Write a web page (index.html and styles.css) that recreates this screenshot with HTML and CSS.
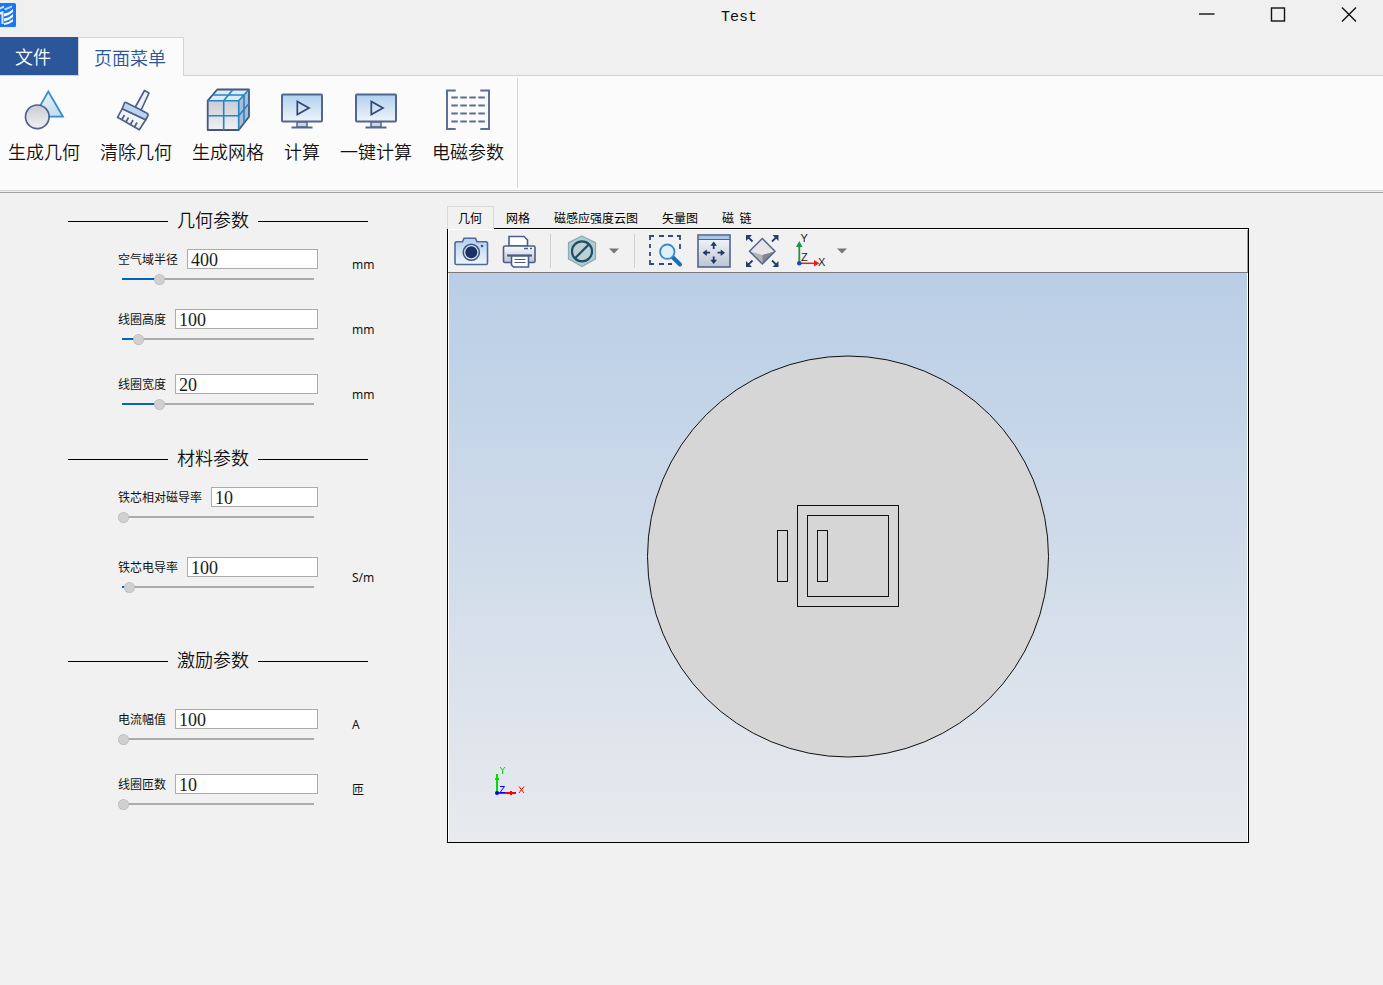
FILE: index.html
```html
<!DOCTYPE html>
<html lang="zh-CN">
<head>
<meta charset="utf-8">
<title>Test</title>
<link rel="stylesheet" href="styles.css">
</head>
<body>
<svg class="defs" width="0" height="0" aria-hidden="true">
  <defs>
    <linearGradient id="gray" x1="0" y1="0" x2="0" y2="1"><stop offset="0" stop-color="#c9ccd6"/><stop offset="1" stop-color="#f1f1f3"/></linearGradient>
    <linearGradient id="blue" x1="0" y1="0" x2="0" y2="1"><stop offset="0" stop-color="#b0d0ee"/><stop offset="1" stop-color="#f0f4f9"/></linearGradient>
    <linearGradient id="tri" x1="0" y1="0" x2="1" y2="1"><stop offset="0" stop-color="#f4f8fc"/><stop offset="1" stop-color="#b9d6f0"/></linearGradient>
    <linearGradient id="steel" x1="0" y1="0" x2="0" y2="1"><stop offset="0" stop-color="#fafafc"/><stop offset="1" stop-color="#bcc3d3"/></linearGradient>
    <symbol id="monitor" viewBox="0 0 48 48">
      <rect x="4" y="8.5" width="40" height="27" rx="1" fill="url(#blue)" stroke="#52668f" stroke-width="2"/>
      <path d="M19.300 15.500V28.500L31 22Z" fill="none" stroke="#33487a" stroke-width="1.700"/>
      <rect x="19" y="36" width="10" height="5" fill="#cfd3dc" stroke="#52668f" stroke-width="1.500"/>
      <path d="M13.500 41.500H34.500" stroke="#52668f" stroke-width="2"/>
    </symbol>
  </defs>
</svg>

<header class="titlebar">
  <svg class="logo" viewBox="0 0 16 24" width="16" height="24" aria-hidden="true">
    <path d="M0 0H14.500Q16 0 16 1.500V22.500Q16 24 14.500 24H0Z" fill="#1877f2"/>
    <path d="M0 4.500 4 2.500V4.500L0 6.500ZM0 9 3.500 8V21H1.500V11.500H0Z" fill="#dcebff"/>
    <path d="M4 5.500 12 2.500V4.500L5 7.500Z" fill="#b9d6ff"/>
    <path d="M4 10.500Q9 10 13 6V9Q9 12.500 4 13.500ZM4 15.500Q9 15 13 11V14Q9 17.500 4 18.500ZM4 20Q9 19.500 13 16V18.500Q9 21.500 4 22Z" fill="#fff"/>
  </svg>
  <h1 class="title">Test</h1>
  <div class="window-controls">
    <button type="button" aria-label="最小化"><svg viewBox="0 0 16 16" width="16" height="16"><path d="M0 7H15.500" stroke="#111" stroke-width="1.400"/></svg></button>
    <button type="button" aria-label="最大化"><svg viewBox="0 0 16 16" width="16" height="16"><rect x="1.500" y="1" width="13" height="13" fill="none" stroke="#111" stroke-width="1.400"/></svg></button>
    <button type="button" aria-label="关闭"><svg viewBox="0 0 16 16" width="16" height="16"><path d="M1 .5 15 14.500M15 .5 1 14.500" stroke="#111" stroke-width="1.400"/></svg></button>
  </div>
</header>

<nav class="menu-tabs">
  <button type="button" class="menu-tab file">文件</button>
  <button type="button" class="menu-tab active">页面菜单</button>
</nav>

<div class="ribbon">
  <div class="ribbon-group">
    <button type="button" class="ribbon-item">
      <svg viewBox="0 0 48 48" width="48" height="48"><path d="M28.300 5.500 43 30.700H14Z" fill="url(#tri)" stroke="#2e8fcb" stroke-width="1.700"/><circle cx="17.300" cy="30.800" r="11.800" fill="url(#gray)" stroke="#51618a" stroke-width="1.700"/></svg>
      <span>生成几何</span>
    </button>
    <button type="button" class="ribbon-item">
      <svg viewBox="0 0 48 48" width="48" height="48" stroke="#4f608a" stroke-width="1.700" stroke-linejoin="round"><path d="M32.500 4.500 37 7 28.500 25.500 22.500 22.500Z" fill="#eef1f6"/><path d="M10.300 22.700 5.500 31.300 27.300 43.800 33.700 33.800Z" fill="#f3f4f7"/><path d="M14 16.500Q12.500 16 12 18L10.300 22.700 33.700 33.800 36 29.500Q36.500 28 35 27.300L28 23.500 22 20.500Z" fill="#b8d6f2"/><path d="M10 33.500 12.500 29M14 36 16.500 31.500M18.500 38.500 21 34M22.500 41 25 36.500" fill="none"/></svg>
      <span>清除几何</span>
    </button>
    <button type="button" class="ribbon-item">
      <svg viewBox="0 0 48 48" width="48" height="48" stroke-linejoin="round"><path d="M3.700 14.700 13.300 3.500H45L34.700 14.700Z" fill="#dcebf7"/><path d="M34.700 14.700 45 3.500V30.700L34.700 44Z" fill="#a9bdd6"/><path d="M3.700 14.700H34.700V44H3.700Z" fill="url(#gray)"/><path d="M3.700 14.700 13.300 3.500H45V30.700L34.700 44H3.700Z" fill="none" stroke="#45577f" stroke-width="1.800"/><path d="M3.700 14.700H34.700V44M34.700 14.700 45 3.500M19.700 44V14.700L29 3.500M3.700 29.700H34.700L45 17.500M8.500 9H40V37" fill="none" stroke="#2485c4" stroke-width="1.600"/></svg>
      <span>生成网格</span>
    </button>
    <button type="button" class="ribbon-item narrow">
      <svg width="48" height="48"><use href="#monitor"/></svg>
      <span>计算</span>
    </button>
    <button type="button" class="ribbon-item">
      <svg width="48" height="48"><use href="#monitor"/></svg>
      <span>一键计算</span>
    </button>
    <button type="button" class="ribbon-item">
      <svg viewBox="0 0 48 48" width="48" height="48" fill="none" stroke="#5d6f94" stroke-width="2"><path d="M11.700 4.500H3V43H11.700M36.300 4.500H45V43H36.300"/><path d="M7.300 11.500H41M7.300 19.500H41M7.300 27.500H41M7.300 35.500H41" stroke-dasharray="6.500 2.500"/></svg>
      <span>电磁参数</span>
    </button>
  </div>
</div>

<main class="workspace">
  <form class="params">
    <fieldset class="section geometry">
      <legend class="section-title"><span>几何参数</span></legend>
      <div class="field">
        <div class="entry"><label for="radius">空气域半径</label><input class="text" id="radius" type="text" value="400"></div>
        <input class="slider" type="range" aria-label="空气域半径" value="19" style="--value:19">
        <span class="unit high">mm</span>
      </div>
      <div class="field">
        <div class="entry"><label for="coil-height">线圈高度</label><input class="text" id="coil-height" type="text" value="100"></div>
        <input class="slider" type="range" aria-label="线圈高度" value="8" style="--value:8">
        <span class="unit">mm</span>
      </div>
      <div class="field">
        <div class="entry"><label for="coil-width">线圈宽度</label><input class="text" id="coil-width" type="text" value="20"></div>
        <input class="slider" type="range" aria-label="线圈宽度" value="19" style="--value:19">
        <span class="unit">mm</span>
      </div>
    </fieldset>

    <fieldset class="section material">
      <legend class="section-title"><span>材料参数</span></legend>
      <div class="field">
        <div class="entry"><label for="permeability">铁芯相对磁导率</label><input class="text" id="permeability" type="text" value="10"></div>
        <input class="slider" type="range" aria-label="铁芯相对磁导率" value="0" style="--value:0">
      </div>
      <div class="field">
        <div class="entry"><label for="conductivity">铁芯电导率</label><input class="text" id="conductivity" type="text" value="100"></div>
        <input class="slider" type="range" aria-label="铁芯电导率" value="3" style="--value:3">
        <span class="unit">S/m</span>
      </div>
    </fieldset>

    <fieldset class="section excitation">
      <legend class="section-title"><span>激励参数</span></legend>
      <div class="field">
        <div class="entry"><label for="current">电流幅值</label><input class="text" id="current" type="text" value="100"></div>
        <input class="slider" type="range" aria-label="电流幅值" value="0" style="--value:0">
        <span class="unit high">A</span>
      </div>
      <div class="field">
        <div class="entry"><label for="turns">线圈匝数</label><input class="text" id="turns" type="text" value="10"></div>
        <input class="slider" type="range" aria-label="线圈匝数" value="0" style="--value:0">
        <span class="unit high">匝</span>
      </div>
    </fieldset>
  </form>

  <section class="viewer">
    <div class="view-tabs" role="tablist">
      <button type="button" role="tab" aria-selected="true" class="view-tab active">几何</button>
      <button type="button" role="tab" class="view-tab">网格</button>
      <button type="button" role="tab" class="view-tab">磁感应强度云图</button>
      <button type="button" role="tab" class="view-tab">矢量图</button>
      <button type="button" role="tab" class="view-tab">磁&nbsp; 链</button>
    </div>
    <div class="view-frame">
      <div class="toolbar">
        <button type="button" class="tool" aria-label="截图">
          <svg viewBox="0 0 36 36" width="36" height="36"><path d="M3.500 8.700H9.500L11 5.300H22.500L24 8.700H33Q34.500 8.700 34.500 10.500V30Q34.500 31.500 33 31.500H3.500Q2 31.500 2 30V10.500Q2 8.700 3.500 8.700Z" fill="url(#blue)" stroke="#51689a" stroke-width="1.600"/><circle cx="18.300" cy="19.300" r="8" fill="#d5e4f4" stroke="#3d5482" stroke-width="1.500"/><circle cx="18.300" cy="19.300" r="6" fill="#1c3266"/><circle cx="29" cy="13" r="1.300" fill="#3d5482"/></svg>
        </button>
        <button type="button" class="tool" aria-label="打印">
          <svg viewBox="0 0 36 36" width="36" height="36" stroke="#4a5c88" stroke-width="1.600"><path d="M8 13V3.500H23L26.500 7V13Z" fill="#fff"/><rect x="2.500" y="13" width="31.500" height="16.500" rx="1.500" fill="url(#steel)"/><path d="M6 22.500H31" stroke-width="2.200"/><path d="M23 15.500H27M29 15.500H31" stroke-width="1.300"/><path d="M10.500 23H27.500V34H12.500L10.500 32Z" fill="#fff"/><path d="M13.500 26.500H24.500M13.500 29.500H24.500" stroke-width="1.200"/></svg>
        </button>
        <span class="separator"></span>
        <button type="button" class="tool split" aria-label="选择过滤">
          <svg viewBox="0 0 36 36" width="36" height="36"><path d="M18 3 31.500 9.700V26L18 33.500 4.500 26V9.700Z" fill="#b2ccd1" stroke="#8aabb4" stroke-width="1.200"/><circle cx="18" cy="18.300" r="10" fill="#bfd0d4" stroke="#1c4f63" stroke-width="2.200"/><path d="M11 25.300 25 11.300" stroke="#1c4f63" stroke-width="2.200"/></svg>
          <svg viewBox="0 0 10 6" width="10" height="6"><path d="M0 .5H10L5 5.500Z" fill="#777"/></svg>
        </button>
        <span class="separator"></span>
        <button type="button" class="tool" aria-label="框选缩放">
          <svg viewBox="0 0 36 36" width="36" height="36"><path d="M2 7V3H6M11 3H16M20 3H25M29 3H32V7M2 11V15M2 19V23M2 27V31H6M11 31H16M32 11V16M20 31H24" fill="none" stroke="#34497a" stroke-width="1.800"/><path d="M24.500 24 32 31.500" stroke="#1871b3" stroke-width="4" stroke-linecap="round"/><circle cx="19.300" cy="18.700" r="7.200" fill="#e0f0fb" stroke="#348bc8" stroke-width="1.800"/></svg>
        </button>
        <button type="button" class="tool" aria-label="平移">
          <svg viewBox="0 0 36 36" width="36" height="36"><rect x="2" y="2" width="32" height="32" fill="url(#steel)" stroke="#51648f" stroke-width="1.600"/><path d="M3 3H33V6H3Z" fill="#a5c7e6"/><path d="M2 6.500H34" stroke="#51648f"/><path d="M17.700 16V11M17.700 23.500V29M14 19.700H9M21.500 19.700H27" stroke="#1f3769" stroke-width="1.800"/><path d="M17.700 8.500 21 12.800H14.400ZM17.700 31 21 26.700H14.400ZM6.500 19.700 10.800 16.400V23ZM29 19.700 24.700 16.400V23Z" fill="#1f3769"/></svg>
        </button>
        <button type="button" class="tool" aria-label="适应窗口">
          <svg viewBox="0 0 36 36" width="36" height="36"><path d="M18.300 5.500 31 18.300 18.300 22 5.500 18.300Z" fill="#e6e6e8"/><path d="M5.500 18.300 18.300 22V31Z" fill="#b3b3b7"/><path d="M31 18.300 18.300 22V31Z" fill="#85868d"/><path d="M18.300 5.500 31 18.300 18.300 31 5.500 18.300Z" fill="none" stroke="#53678f" stroke-width="1.500"/><path d="M4 4 8.500 8.500M32.500 4 28 8.500M4 32 8.500 27.500M32.500 32 28 27.500" stroke="#263d70" stroke-width="1.800"/><path d="M2 2H8L2 8ZM34.500 2H28.500L34.500 8ZM2 34H8L2 28ZM34.500 34H28.500L34.500 28Z" fill="#263d70"/></svg>
        </button>
        <button type="button" class="tool split" aria-label="视图方向">
          <svg class="axes" viewBox="0 0 36 36" width="36" height="36"><path d="M7.300 30V12" stroke="#1c9448" stroke-width="1.800"/><path d="M7.300 8 10.500 14H4Z" fill="#1c9448"/><path d="M8 30.300H23" stroke="#e82020" stroke-width="1.500"/><path d="M27.500 30.300 22 27V33.500Z" fill="#e82020"/><circle cx="7.300" cy="30.300" r="2.300" fill="#1c49b5"/><text x="8.500" y="9">Y</text><text x="9" y="28">Z</text><text x="26" y="33">X</text></svg>
          <svg viewBox="0 0 10 6" width="10" height="6"><path d="M0 .5H10L5 5.500Z" fill="#777"/></svg>
        </button>
      </div>
      <div class="canvas">
        <svg class="model" viewBox="0 1 404 404" width="404" height="404" role="img" aria-label="几何模型" fill="none" stroke="#111">
          <circle cx="202" cy="202.500" r="200.500" fill="#d6d6d6"/>
          <g shape-rendering="crispEdges">
            <rect x="151.500" y="151.500" width="101" height="101"/>
            <rect x="161.500" y="161.500" width="81" height="81"/>
            <rect x="131.500" y="176.500" width="10" height="51"/>
            <rect x="171.500" y="176.500" width="10" height="51"/>
          </g>
        </svg>
        <svg class="triad" viewBox="0 0 40 40" width="40" height="40" aria-hidden="true">
          <path d="M7 31V12M5 17H9" stroke="#00dc00" stroke-width="2"/><path d="M7 31H26M21 29V33" stroke="#f00" stroke-width="2"/><circle cx="7" cy="31" r="2" fill="#00f"/>
          <path d="M10 5 12.500 8 15 5M12.500 8V12" fill="none" stroke="#00dc00"/><path d="M10 24.500H14.500L10 30.500H15" fill="none" stroke="#00f"/><path d="M29 24.500 34 31M34 24.500 29 31" stroke="#f00"/>
        </svg>
      </div>
    </div>
  </section>
</main>
</body>
</html>
```
FILE: styles.css
```css
* { box-sizing: border-box; }

body {
  margin: 0;
  min-height: 100vh;
  background: #f1f1f1;
  color: #111;
  font: 400 12px/16px "Noto Sans", "Noto Sans CJK SC", sans-serif;
}

button {
  margin: 0;
  padding: 0;
  border: 0;
  background: none;
  color: inherit;
  font: inherit;
}

svg { display: block; flex: none; }
.defs { position: absolute; }

/* Title bar */
.titlebar {
  display: flex;
  height: 37px;
  background: #f0f0f0;
}
.logo { margin-top: 3px; }
.title {
  flex: 1;
  margin: 0;
  padding-left: 292px;
  font: 400 15px/36px "Liberation Mono", monospace;
  text-align: center;
}
.window-controls { display: flex; }
.window-controls button {
  display: flex;
  justify-content: center;
  width: 71px;
  padding: 7px 0 0 3px;
}

/* Menu tabs */
.menu-tabs {
  display: flex;
  height: 39px;
  border-bottom: 1px solid #d4d4d4;
  background: #f0f0f0;
}
.menu-tab {
  height: 39px;
  padding: 0 16px 0 15px;
  font-family: "Noto Sans CJK SC", sans-serif;
  font-size: 18px;
  font-weight: 350;
  line-height: 36px;
}
.menu-tab.file {
  height: 38px;
  padding-right: 27px;
  background: #2b579a;
  color: #fff;
}
.menu-tab.active {
  padding-right: 17px;
  border: 1px solid #d4d4d4;
  border-bottom: 0;
  background: #fbfbfb;
  color: #2b579a;
}

/* Ribbon */
.ribbon {
  display: flex;
  height: 117px;
  padding: 2px 0;
  border-bottom: 1px solid #a0a0a0;
  background: #fbfbfb;
  box-shadow: inset 0 -1px #f1f1f1, inset 0 -2px #d4d4d4;
}
.ribbon-group {
  display: flex;
  gap: 20px;
  margin-bottom: 2px;
  padding: 8px 13px 0 8px;
  border-right: 1px solid #d4d4d4;
}
.ribbon-item {
  display: flex;
  flex-direction: column;
  align-items: center;
  gap: 5px;
  width: 72px;
  font-family: "Noto Sans CJK SC", sans-serif;
  font-size: 18px;
  font-weight: 350;
  line-height: 24px;
  white-space: nowrap;
}
.ribbon-item.narrow { width: 36px; }

/* Workspace */
.workspace {
  display: flex;
  align-items: flex-start;
  padding-right: 134px;
}

.params {
  flex: none;
  width: 447px;
  padding: 16px 72px 0 68px;
}
.section {
  min-width: 0;
  margin: 0;
  padding: 0;
  border: 0;
}
.section-title {
  display: flex;
  align-items: center;
  gap: 9px;
  width: 300px;
  padding: 0;
  font-family: "Noto Sans CJK SC", sans-serif;
  font-size: 18px;
  font-weight: 350;
  line-height: 20px;
}
.section-title span { padding-bottom: 4px; }
.section-title::before,
.section-title::after {
  content: "";
  flex: none;
  width: 100px;
  height: 1px;
  background: #000;
}
.section-title::after { width: 110px; }

.field {
  display: grid;
  grid-template: 20px 20px / 200px auto;
  column-gap: 34px;
  margin: 25px 0 0 50px;
}
.section-title + .field { margin-top: 16px; }
.geometry .field:nth-of-type(2) { margin-top: 20px; }
.material { margin-top: 33px; }
.material .field + .field { margin-top: 30px; }
.excitation { margin-top: 52px; }
.excitation .section-title + .field { margin-top: 36px; }

.entry {
  display: flex;
  align-items: center;
  gap: 9px;
}
.entry label {
  flex: none;
  font-family: "Noto Sans CJK SC", sans-serif;
}
.text {
  flex: 1;
  min-width: 0;
  height: 20px;
  padding: 2px 3px 0;
  border: 1px solid #ababab;
  background: #fff;
  color: #1a1a1a;
  font: 18px/18px "Liberation Serif", serif;
}
.unit {
  grid-area: 1 / 2 / 3 / 3;
  line-height: 42px;
}
.unit.high { line-height: 32px; }

.slider {
  appearance: none;
  grid-area: 2 / 1;
  width: 200px;
  height: 20px;
  margin: 0;
  background:
    linear-gradient(#0067c0, #0067c0) 4px 9px / calc(var(--value) * 2px) 2px no-repeat,
    linear-gradient(#ababab, #ababab) 4px 9px / 192px 2px no-repeat;
}
.slider::-webkit-slider-thumb {
  appearance: none;
  width: 11px;
  height: 11px;
  border: 1px dotted #b0b0b0;
  border-radius: 50%;
  background: #d0d0d0;
}

/* Viewer */
.viewer {
  flex: 1;
  min-width: 0;
  padding-top: 13px;
}
.view-tabs {
  position: relative;
  display: flex;
  margin-bottom: -1px;
}
.view-tab {
  height: 23px;
  padding: 0 12px;
  color: #000;
  font-family: "Noto Sans CJK SC", sans-serif;
  line-height: 23px;
}
.view-tab.active {
  padding: 0 11px 0 10px;
  border: 1px solid #d9d9d9;
  border-bottom: 0;
  background: #f1f1f1;
  line-height: 22px;
}
.view-frame { border: 1px solid #000; }
.toolbar {
  display: flex;
  align-items: center;
  gap: 12px;
  height: 44px;
  padding: 0 5px;
  border-bottom: 1px solid #7a7a7a;
  box-shadow: inset 1px 1px #fff, inset -1px 0 #a0a0a0;
}
.tool { display: flex; align-items: center; }
.tool.split { gap: 9px; padding-right: 2px; }
.separator {
  width: 1px;
  height: 34px;
  margin: 0 1px;
  background: #cfcfcf;
}
.axes text { font: 400 11px "Liberation Sans", sans-serif; fill: #222; }

.canvas {
  position: relative;
  display: flex;
  align-items: center;
  justify-content: center;
  min-height: 569px;
  border-left: 1px solid #fff;
  border-right: 1px solid #fff;
  background: linear-gradient(#b9cee6, #e8eaee);
}
.model { margin-bottom: 1px; }
.triad {
  position: absolute;
  left: 41px;
  bottom: 40px;
}
```
